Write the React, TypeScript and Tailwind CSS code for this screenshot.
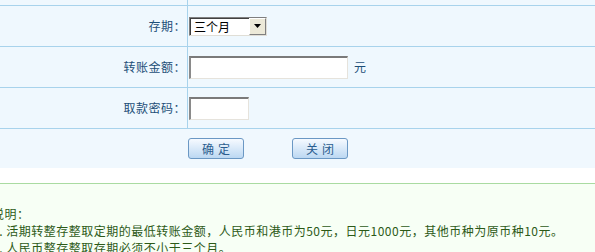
import React from "react";

const font = { fontFamily: '"Noto Sans CJK SC", "Noto Sans", sans-serif' };

function Row({ label, children }: { label: string; children?: React.ReactNode }) {
  return (
    <div className="flex h-[41px] border-b border-[#a8d3ec] bg-[#eff8fe]">
      <div className="w-[188px] border-r border-[#a8d3ec] flex items-center justify-end pr-[1px] text-[12px] text-[#1d4f78] tracking-[0.5px]">
        {label}
      </div>
      <div className="flex-1 flex items-center pl-px">{children}</div>
    </div>
  );
}

function Btn({ text }: { text: string }) {
  return (
    <div className="w-[56px] h-[21px] rounded-[3px] border border-[#6b98c4] bg-gradient-to-b from-[#f6faff] to-[#bcd8f2] flex items-center justify-center text-[12px] text-[#2a5d8f] tracking-[4px] pl-[4px]">
      {text}
    </div>
  );
}

function Inset({ w }: { w: number }) {
  return (
    <div
      className="h-[23px] bg-white border-t-2 border-l-2 border-b border-r border-t-[#7a7a7a] border-l-[#8a8a8a] border-b-[#e6e3dc] border-r-[#e6e3dc]"
      style={{ width: w }}
    />
  );
}

export default function App() {
  return (
    <div className="w-[595px] h-[252px] overflow-hidden bg-white" style={font}>
      <div className="flex h-[6px] border-b border-[#a8d3ec] bg-[#eff8fe]">
        <div className="w-[188px] border-r border-[#a8d3ec]" />
        <div className="flex-1" />
      </div>
      <Row label="存期：">
        <div className="w-[78px] h-[19px] flex bg-white border border-t-[#7f7f7f] border-l-[#7f7f7f] border-b-[#e0ded6] border-r-[#e0ded6]">
          <div className="flex-1 flex items-center pl-[3px] text-[12px] text-black border-t border-l border-[#404040]">三个月</div>
          <div className="w-[17px] bg-[#ece9d8] border border-t-white border-l-white border-b-[#808080] border-r-[#808080] flex items-center justify-center">
            <svg width="7" height="4" viewBox="0 0 7 4"><path d="M0 0h7L3.5 4z" fill="#000" /></svg>
          </div>
        </div>
      </Row>
      <Row label="转账金额：">
        <Inset w={159} />
        <span className="ml-[6px] text-[12px] text-[#1d4f78]">元</span>
      </Row>
      <Row label="取款密码：">
        <Inset w={60} />
      </Row>
      <div className="h-[39px] bg-[#f0f8fe] flex items-center pl-[188px] gap-[48px]">
        <Btn text="确定" />
        <Btn text="关闭" />
      </div>
      <div className="h-[15px] bg-white" />
      <div className="border-t border-[#a9dba1] bg-[#f7fff5] h-[100px] pt-[21px] -ml-[8px] text-[12px] leading-[17px] text-[#2c5a17] tracking-[0.5px] whitespace-nowrap">
        <div>说明：</div>
        <div>1. 活期转整存整取定期的最低转账金额，人民币和港币为50元，日元1000元，其他币种为原币种10元。</div>
        <div>2. 人民币整存整取存期必须不小于三个月。</div>
      </div>
    </div>
  );
}
